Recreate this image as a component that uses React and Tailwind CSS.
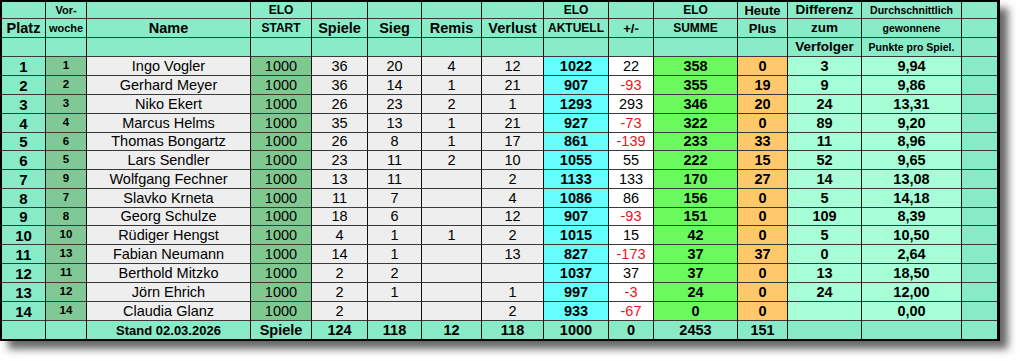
const cols =
  "grid grid-cols-[44px_41px_164px_61px_56px_54px_60px_62px_65px_45px_84px_50px_74px_100px_35px]";

const players = [
  [1, 1, "Ingo Vogler", 36, 20, 4, 12, 1022, 22, 358, 0, 3, "9,94"],
  [2, 2, "Gerhard Meyer", 36, 14, 1, 21, 907, -93, 355, 19, 9, "9,86"],
  [3, 3, "Niko Ekert", 26, 23, 2, 1, 1293, 293, 346, 20, 24, "13,31"],
  [4, 4, "Marcus Helms", 35, 13, 1, 21, 927, -73, 322, 0, 89, "9,20"],
  [5, 6, "Thomas Bongartz", 26, 8, 1, 17, 861, -139, 233, 33, 11, "8,96"],
  [6, 5, "Lars Sendler", 23, 11, 2, 10, 1055, 55, 222, 15, 52, "9,65"],
  [7, 9, "Wolfgang Fechner", 13, 11, "", 2, 1133, 133, 170, 27, 14, "13,08"],
  [8, 7, "Slavko Krneta", 11, 7, "", 4, 1086, 86, 156, 0, 5, "14,18"],
  [9, 8, "Georg Schulze", 18, 6, "", 12, 907, -93, 151, 0, 109, "8,39"],
  [10, 10, "Rüdiger Hengst", 4, 1, 1, 2, 1015, 15, 42, 0, 5, "10,50"],
  [11, 13, "Fabian Neumann", 14, 1, "", 13, 827, -173, 37, 37, 0, "2,64"],
  [12, 11, "Berthold Mitzko", 2, 2, "", "", 1037, 37, 37, 0, 13, "18,50"],
  [13, 12, "Jörn Ehrich", 2, 1, "", 1, 997, -3, 24, 0, 24, "12,00"],
  [14, 14, "Claudia Glanz", 2, "", "", 2, 933, -67, 0, 0, "", "0,00"],
];

const header = [
  ["", "Platz", ""],
  ["Vor-", "woche", ""],
  ["", "Name", ""],
  ["ELO", "START", ""],
  ["", "Spiele", ""],
  ["", "Sieg", ""],
  ["", "Remis", ""],
  ["", "Verlust", ""],
  ["ELO", "AKTUELL", ""],
  ["", "+/-", ""],
  ["ELO", "SUMME", ""],
  ["Heute", "Plus", ""],
  ["Differenz", "zum", "Verfolger"],
  ["Durchschnittlich", "gewonnene", "Punkte pro Spiel."],
  ["", "", ""],
];

// text size per header column
const headSize = [
  "text-[14.5px]",
  "text-[11px]",
  "text-[14.5px]",
  "text-[12px]",
  "text-[14.5px]",
  "text-[14.5px]",
  "text-[14.5px]",
  "text-[14.5px]",
  "text-[12px]",
  "text-[13px]",
  "text-[12px]",
  "text-[13px]",
  "text-[13.5px]",
  "text-[10.5px]",
  "text-[13px]",
];

const bodyBg = [
  "bg-[#86ebc6]",
  "bg-[#80c896]",
  "bg-[#eeeeee]",
  "bg-[#7fc991]",
  "bg-[#eeeeee]",
  "bg-[#eeeeee]",
  "bg-[#eeeeee]",
  "bg-[#eeeeee]",
  "bg-[#66ffff]",
  "bg-white",
  "bg-[#6bfa5e]",
  "bg-[#ffc86b]",
  "bg-[#a6ffd6]",
  "bg-[#a6ffd6]",
  "bg-[#88ebc8]",
];

const bodyFont = [
  "font-bold text-[15px]",
  "font-bold text-[11.5px]",
  "text-[14.5px]",
  "text-[14.5px]",
  "text-[14.5px]",
  "text-[14.5px]",
  "text-[14.5px]",
  "text-[14.5px]",
  "font-bold text-[14.5px]",
  "text-[14.5px]",
  "font-bold text-[14.5px]",
  "font-bold text-[14.5px]",
  "font-bold text-[14.5px]",
  "font-bold text-[14.5px]",
  "text-[14.5px]",
];

const totals = ["", "", "Stand 02.03.2026", "Spiele", 124, 118, 12, 118, 1000, 0, 2453, 151, "", "", ""];

function Cell({ children, className, last, bottom }) {
  return (
    <div
      className={`flex items-center justify-center leading-none overflow-hidden whitespace-nowrap ${
        last ? "" : "border-r border-r-[#111]"
      } ${bottom ? "" : "border-b border-b-[#3a3a3a]"} ${className}`}
    >
      {children}
    </div>
  );
}

export default function App() {
  return (
    <div className="w-[1020px] h-[361px] bg-white font-['Liberation_Sans',Arial,sans-serif] text-black">
      <div className="w-[1000px] border-l-2 border-t-2 border-r-[3px] border-b-2 border-black shadow-[8px_8px_8px_rgba(0,0,0,0.6)]">
        {[0, 1, 2].map((r) => (
          <div key={r} className={`${cols} ${r === 0 ? "h-[17px]" : "h-[19px]"} bg-[#88ecc8]`}>
            {header.map((h, i) => (
              <Cell key={i} last={i === 14} className={`font-bold ${headSize[i]}`}>
                {h[r]}
              </Cell>
            ))}
          </div>
        ))}

        {players.map((p, r) => {
          const vals = [p[0], p[1], p[2], 1000, ...p.slice(3), ""];
          return (
            <div key={r} className={`${cols} ${r === 4 || r === 8 ? "h-[18px]" : "h-[19px]"}`}>
              {vals.map((v, i) => (
                <Cell
                  key={i}
                  last={i === 14}
                  className={`${bodyBg[i]} ${bodyFont[i]} ${
                    i === 9 && v < 0 ? "text-[#e8141c]" : ""
                  }`}
                >
                  {v}
                </Cell>
              ))}
            </div>
          );
        })}

        <div className={`${cols} h-[18px] bg-[#86ebc6]`}>
          {totals.map((v, i) => (
            <Cell
              key={i}
              last={i === 14}
              bottom
              className={`font-bold ${i === 2 ? "text-[13px]" : "text-[14.5px]"}`}
            >
              {v}
            </Cell>
          ))}
        </div>
      </div>
    </div>
  );
}
